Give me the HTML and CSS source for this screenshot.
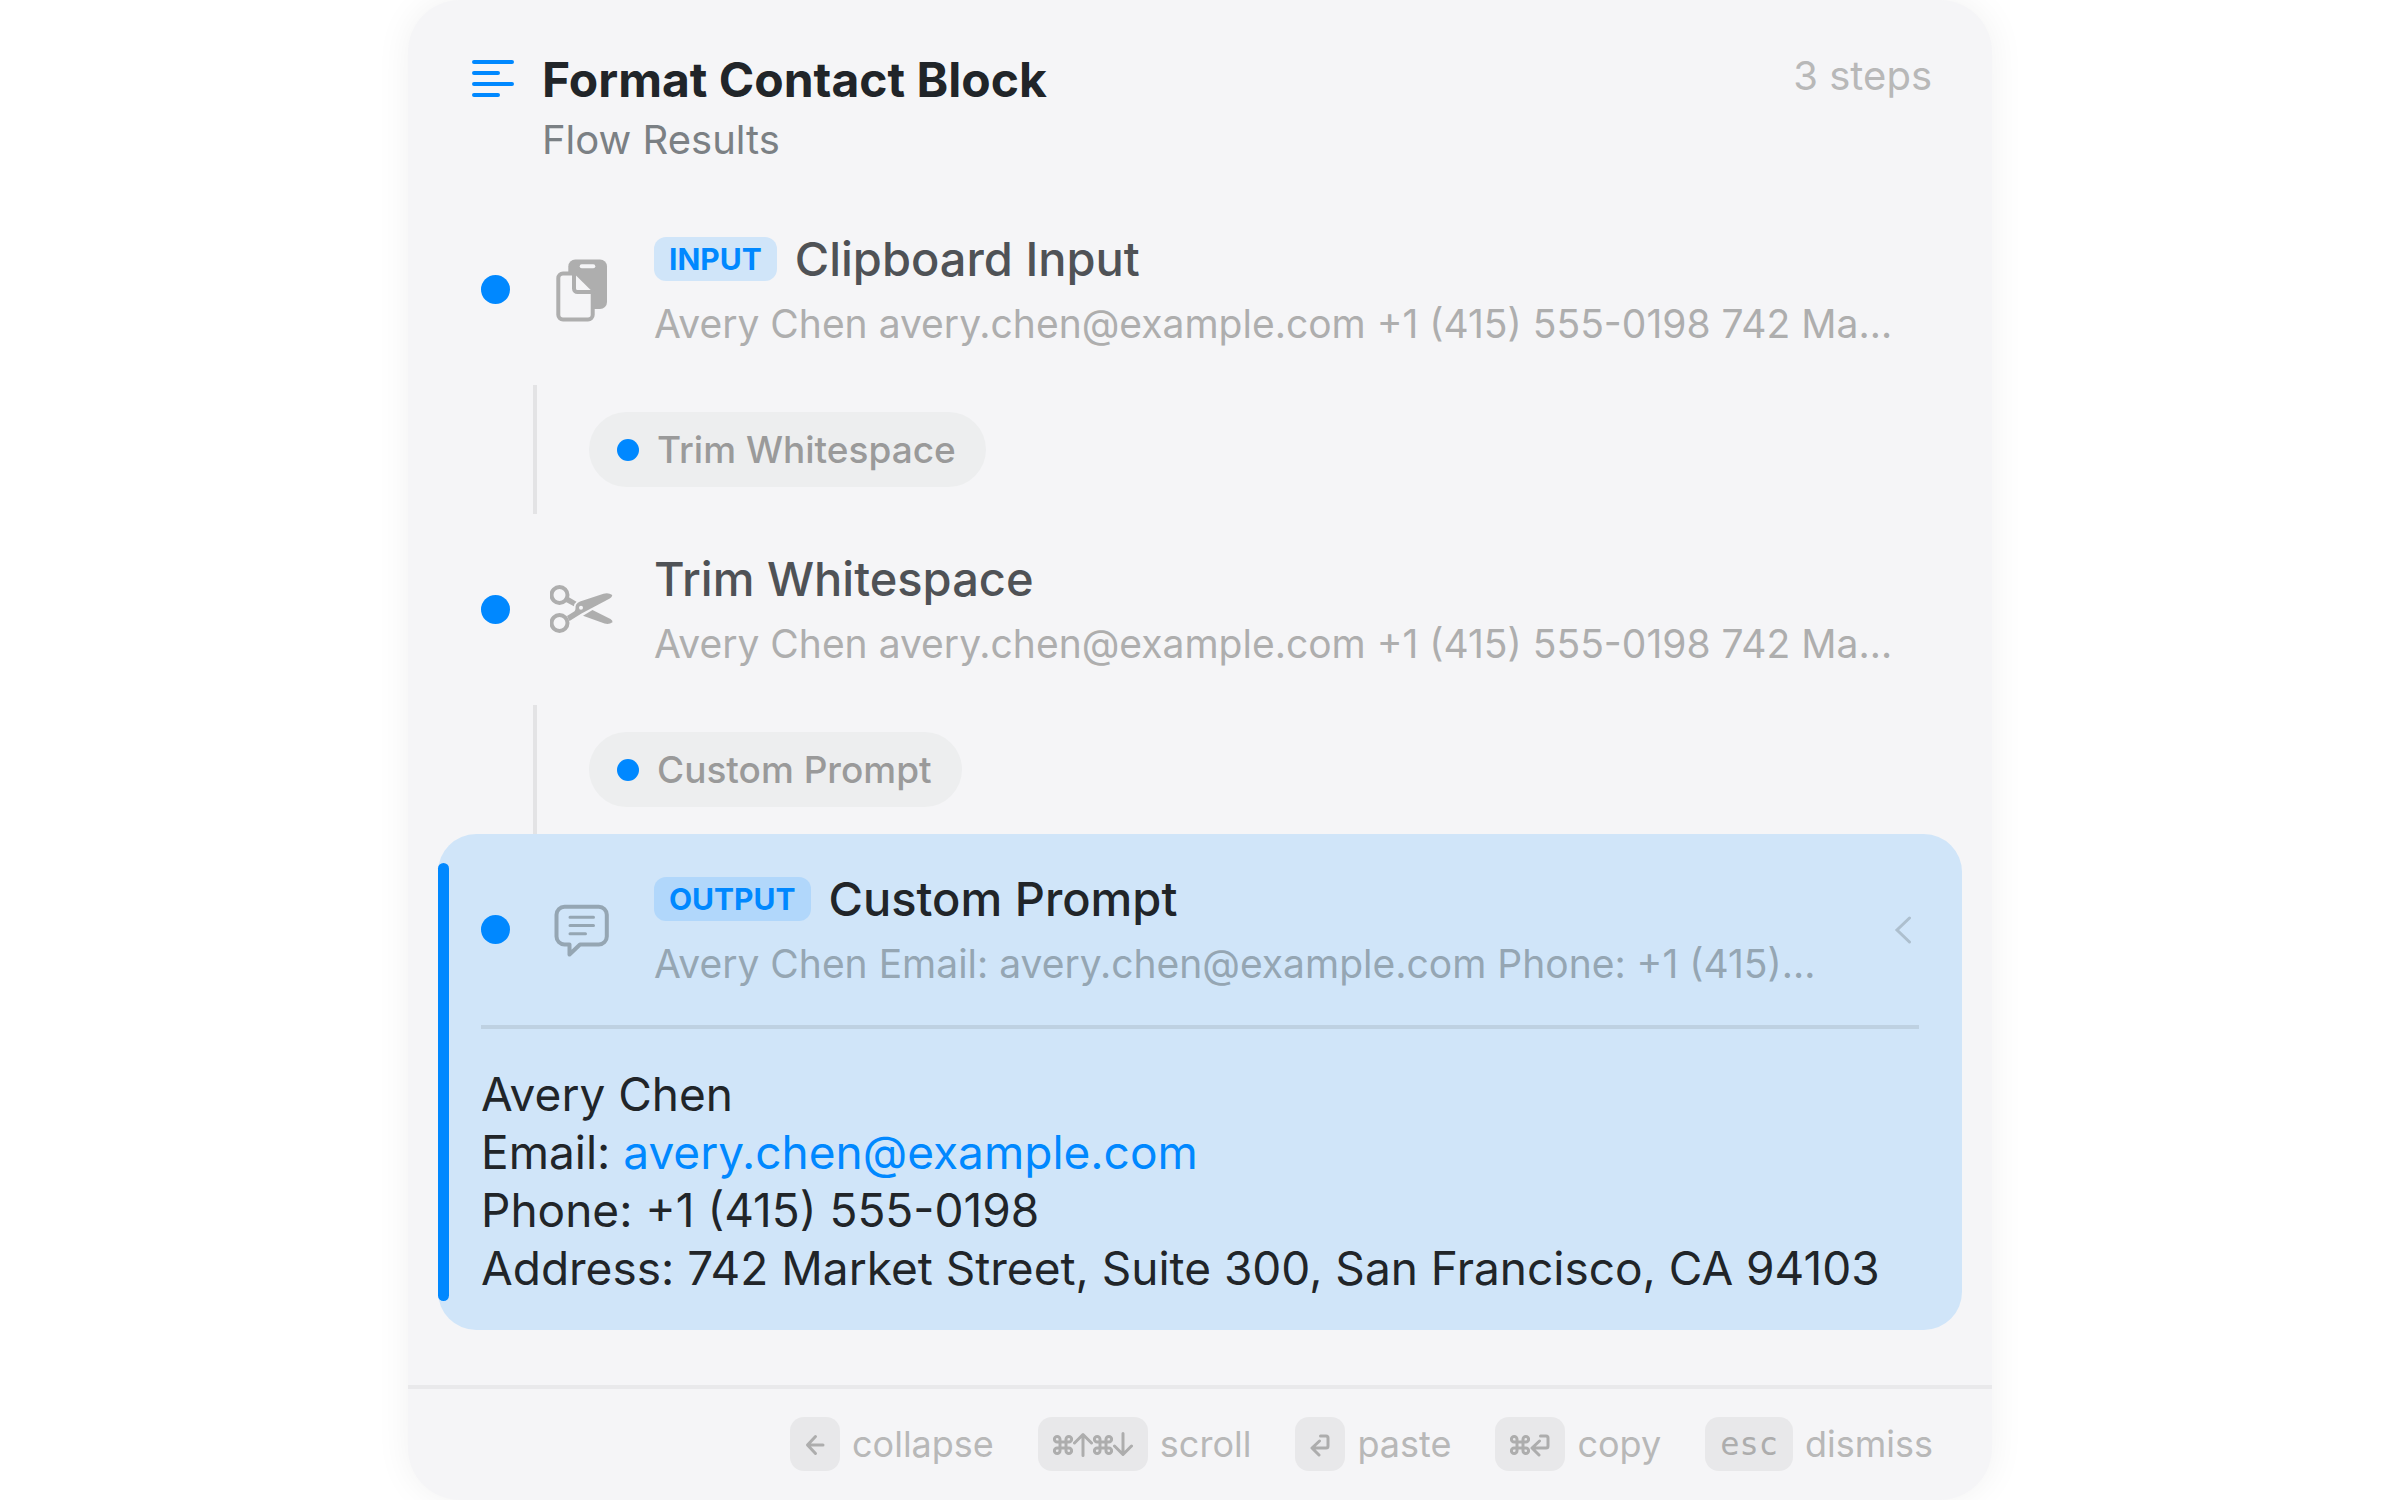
FILE: index.html
```html
<!DOCTYPE html>
<html lang="en">
<head>
    <meta charset="UTF-8">
    <meta name="viewport" content="width=device-width, initial-scale=1.0">
    <title>Format Contact Block</title>
    <link rel="stylesheet" href="styles.css">
</head>
<body>
    <!-- key glyphs shared by the footer -->
    <svg class="sprite" aria-hidden="true">
        <symbol id="key-left" viewBox="0 -1 20 26"><path d="M18 13H3M10.5 4.5L2.5 13l8 8.5"/></symbol>
        <symbol id="key-up" viewBox="0 -1 20 26"><path d="M10 23.5V3M1.5 11L10 2.5l8.5 8.5"/></symbol>
        <symbol id="key-down" viewBox="0 -1 20 26"><path d="M10 1.5V22M1.5 14L10 22.5l8.5-8.5"/></symbol>
        <symbol id="key-return" viewBox="0 -1 20 26"><path d="M10.5 4H16a2 2 0 0 1 2 2v8a2 2 0 0 1-2 2H3M9.5 9L2 16l7 7"/></symbol>
        <symbol id="key-cmd" viewBox="0 -1 20 26"><path d="M7 10V7.2A2.8 2.8 0 1 0 4.2 10H15.8A2.8 2.8 0 1 0 13 7.2V18.8A2.8 2.8 0 1 0 15.8 16H4.2A2.8 2.8 0 1 0 7 18.8z"/></symbol>
    </svg>

    <main class="panel">
        <header class="panel-header">
            <svg class="flow-icon" viewBox="0 0 42 38">
                <path d="M2 2h38M2 13h24M2 24h38M2 35h24"/>
            </svg>
            <div class="heading">
                <h1>Format Contact Block</h1>
                <p>Flow Results</p>
            </div>
            <span class="step-count">3 steps</span>
        </header>

        <section class="steps">
            <article class="step">
                <div class="step-row">
                    <span class="dot"></span>
                    <svg class="step-icon" viewBox="0 0 64 64">
                        <rect class="solid" x="18.3" y="1.5" width="38.7" height="49.5" rx="7"/>
                        <path class="slot" d="M31.7 8.2h11.6"/>
                        <path class="paper" d="M24 15.5H13a4.7 4.7 0 0 0-4.7 4.7v36.6a4.7 4.7 0 0 0 4.7 4.7h25a4.7 4.7 0 0 0 4.7-4.7V34z"/>
                        <path class="line" d="M25 15.5H13a4.7 4.7 0 0 0-4.7 4.7v36.6a4.7 4.7 0 0 0 4.7 4.7h25a4.7 4.7 0 0 0 4.7-4.7V34H27.5a3.5 3.5 0 0 1-3.5-3.5V16"/>
                    </svg>
                    <div class="step-text">
                        <div class="step-title"><span class="badge">INPUT</span><h2>Clipboard Input</h2></div>
                        <p class="preview">Avery Chen avery.chen@example.com +1 (415) 555-0198 742 Ma…</p>
                    </div>
                </div>
            </article>

            <div class="connector">
                <span class="pill"><span class="dot small"></span>Trim Whitespace</span>
            </div>

            <article class="step">
                <div class="step-row">
                    <span class="dot"></span>
                    <svg class="step-icon" viewBox="0 0 64 64">
                        <circle class="line" cx="9.5" cy="17" r="8"/>
                        <circle class="line" cx="9.5" cy="45" r="8"/>
                        <path class="solid" d="M18.5 19l8 4.7q-2.5 1.8-2.6 4.5L15 23.500z"/>
                        <path class="solid" fill-rule="evenodd" d="M17 38l7.5-4.8q1-.8 1-2.7-.5-5 4.5-7l23.5-7.7q5-1.3 8.8 1.2-.2 2.2-2.5 3.5L31.5 35.5 19.5 43zM31 27.8a2 2 0 1 0 0 4 2 2 0 0 0 0-4z"/>
                        <path class="solid" d="M33 37.8l9.5-5.8 18 9q2.3 1.3 2 3.2-3.5 2.6-8 1.3z"/>
                    </svg>
                    <div class="step-text">
                        <div class="step-title"><h2>Trim Whitespace</h2></div>
                        <p class="preview">Avery Chen avery.chen@example.com +1 (415) 555-0198 742 Ma…</p>
                    </div>
                </div>
            </article>

            <div class="connector">
                <span class="pill"><span class="dot small"></span>Custom Prompt</span>
            </div>

            <article class="step selected">
                <div class="step-row">
                    <span class="dot"></span>
                    <svg class="step-icon" viewBox="0 0 64 64">
                        <path class="line" d="M14.5 8.8h34.3a8 8 0 0 1 8 8v21.7a8 8 0 0 1-8 8H30L19.5 56.5v-10h-5a8 8 0 0 1-8-8V16.8a8 8 0 0 1 8-8z"/>
                        <path class="line thin" d="M20 19.2h23.5M20 27.5h23.5M20 35.8h15.5"/>
                    </svg>
                    <div class="step-text">
                        <div class="step-title"><span class="badge">OUTPUT</span><h2>Custom Prompt</h2></div>
                        <p class="preview">Avery Chen Email: avery.chen@example.com Phone: +1 (415)…</p>
                    </div>
                    <button class="collapse" aria-label="Collapse">
                        <svg viewBox="0 0 18 28"><path d="M15.5 2L3 14l12.5 12"/></svg>
                    </button>
                </div>
                <div class="result">
                    Avery Chen<br>
                    Email: <a href="mailto:avery.chen@example.com">avery.chen@example.com</a><br>
                    Phone: +1 (415) 555-0198<br>
                    Address: 742 Market Street, Suite 300, San Francisco, CA 94103
                </div>
            </article>
        </section>

        <footer class="shortcuts">
            <span class="shortcut"><kbd><svg><use href="#key-left"/></svg></kbd>collapse</span>
            <span class="shortcut"><kbd><svg><use href="#key-cmd"/></svg><svg><use href="#key-up"/></svg><svg><use href="#key-cmd"/></svg><svg><use href="#key-down"/></svg></kbd>scroll</span>
            <span class="shortcut"><kbd><svg><use href="#key-return"/></svg></kbd>paste</span>
            <span class="shortcut"><kbd><svg><use href="#key-cmd"/></svg><svg><use href="#key-return"/></svg></kbd>copy</span>
            <span class="shortcut"><kbd>esc</kbd>dismiss</span>
        </footer>
    </main>
</body>
</html>
```
FILE: styles.css
```css
* {
    box-sizing: border-box;
}

body {
    margin: 0;
    background-color: #ffffff;
    color: #212529;
    font-family: Inter, sans-serif;
}

h1, h2, p {
    margin: 0;
}

.sprite {
    display: none;
}

.panel {
    width: 66%;
    min-height: 100vh;
    margin: 0 auto;
    display: flex;
    flex-direction: column;
    background-color: #f5f5f7;
    border-radius: 52px;
    box-shadow: 0 0 36px rgba(0, 0, 0, 0.06);
}

.panel-header {
    display: flex;
    align-items: flex-start;
    padding: 48px 60px 0 64px;
}

.flow-icon {
    width: 42px;
    height: 38px;
    margin: 12px 28px 0 0;
    fill: none;
    stroke: #0088ff;
    stroke-width: 4;
    stroke-linecap: round;
}

.heading {
    flex: 1;
}

h1 {
    font-size: 48px;
    line-height: 64px;
    font-weight: 700;
}

.heading p {
    font-size: 40px;
    line-height: 56px;
    color: #7b8084;
}

.step-count {
    font-size: 40px;
    line-height: 56px;
    color: #b8b8b8;
}

.steps {
    flex: 1;
    padding: 26px 30px 0;
}

.step-row {
    height: 191px;
    display: flex;
    align-items: center;
    padding: 0 43px;
}

.dot {
    flex: none;
    width: 29px;
    height: 29px;
    border-radius: 50%;
    background-color: #0088ff;
}

.dot.small {
    width: 22px;
    height: 22px;
}

.step-icon {
    flex: none;
    width: 64px;
    height: 64px;
    margin: 0 40px;
    color: #aeaeae;
}

.step-text {
    flex: 1;
    min-width: 0;
    padding-top: 4px;
}

.step-title {
    display: flex;
    align-items: center;
    gap: 18px;
}

.badge {
    padding: 0 15px;
    border-radius: 12px;
    background-color: #d0e5f9;
    color: #0088ff;
    font-size: 30px;
    line-height: 44px;
    font-weight: 700;
}

h2 {
    font-size: 47px;
    line-height: 64px;
    font-weight: 500;
    color: #4f5256;
}

.preview {
    font-size: 39px;
    line-height: 66px;
    color: #aeaeae;
    white-space: nowrap;
}

.connector {
    height: 129px;
    display: flex;
    align-items: center;
    margin-left: 95px;
    padding-left: 52px;
    border-left: 4px solid #e3e3e5;
}

.pill {
    display: flex;
    align-items: center;
    gap: 18px;
    padding: 0 30px 0 28px;
    border-radius: 38px;
    background-color: #edeeef;
    color: #9a9a9a;
    font-size: 37px;
    line-height: 75px;
    font-weight: 500;
}

.selected {
    position: relative;
    border-radius: 38px;
    background-color: #d0e5f9;
}

.selected::before {
    content: "";
    position: absolute;
    left: 0;
    top: 29px;
    bottom: 29px;
    width: 11px;
    border-radius: 6px;
    background-color: #0088ff;
}

.selected h2 {
    color: #212529;
}

.selected .badge {
    background-color: #b1d7fb;
}

.selected .preview, .selected .step-icon {
    color: #95a6b3;
}

.solid {
    fill: currentColor;
}

.paper {
    fill: #f5f5f7;
}

.slot {
    stroke: #f5f5f7;
    stroke-width: 4;
    stroke-linecap: round;
}

.line {
    fill: none;
    stroke: currentColor;
    stroke-width: 4;
    stroke-linecap: round;
    stroke-linejoin: round;
}

.thin {
    stroke-width: 3;
}

.collapse {
    width: 24px;
    height: 40px;
    margin: 0 4px 0 56px;
    padding: 0;
    border: none;
    background: none;
    cursor: pointer;
}

.collapse svg {
    display: block;
    width: 18px;
    height: 28px;
    margin: 0 auto;
    fill: none;
    stroke: #adbfce;
    stroke-width: 3;
    stroke-linecap: round;
}

.result {
    margin: 0 43px;
    padding: 36px 0 33px;
    border-top: 4px solid #bed1e2;
    font-size: 46px;
    line-height: 58px;
}

.result a {
    color: #0088ff;
    text-decoration: none;
}

.shortcuts {
    display: flex;
    justify-content: flex-end;
    gap: 44px;
    padding: 28px 59px 29px;
    border-top: 4px solid #e9e9eb;
}

.shortcut {
    display: flex;
    align-items: center;
    gap: 12px;
    color: #b8b8b8;
    font-size: 36px;
    line-height: 54px;
}

kbd {
    display: flex;
    align-items: center;
    height: 54px;
    padding: 0 15px;
    border-radius: 14px;
    background-color: #e8e8ea;
    color: #adadad;
    font-family: "DejaVu Sans Mono", monospace;
    font-size: 32px;
}

kbd svg {
    width: 20px;
    height: 26px;
    fill: none;
    stroke: currentColor;
    stroke-width: 3;
    stroke-linecap: round;
    stroke-linejoin: round;
}
```
